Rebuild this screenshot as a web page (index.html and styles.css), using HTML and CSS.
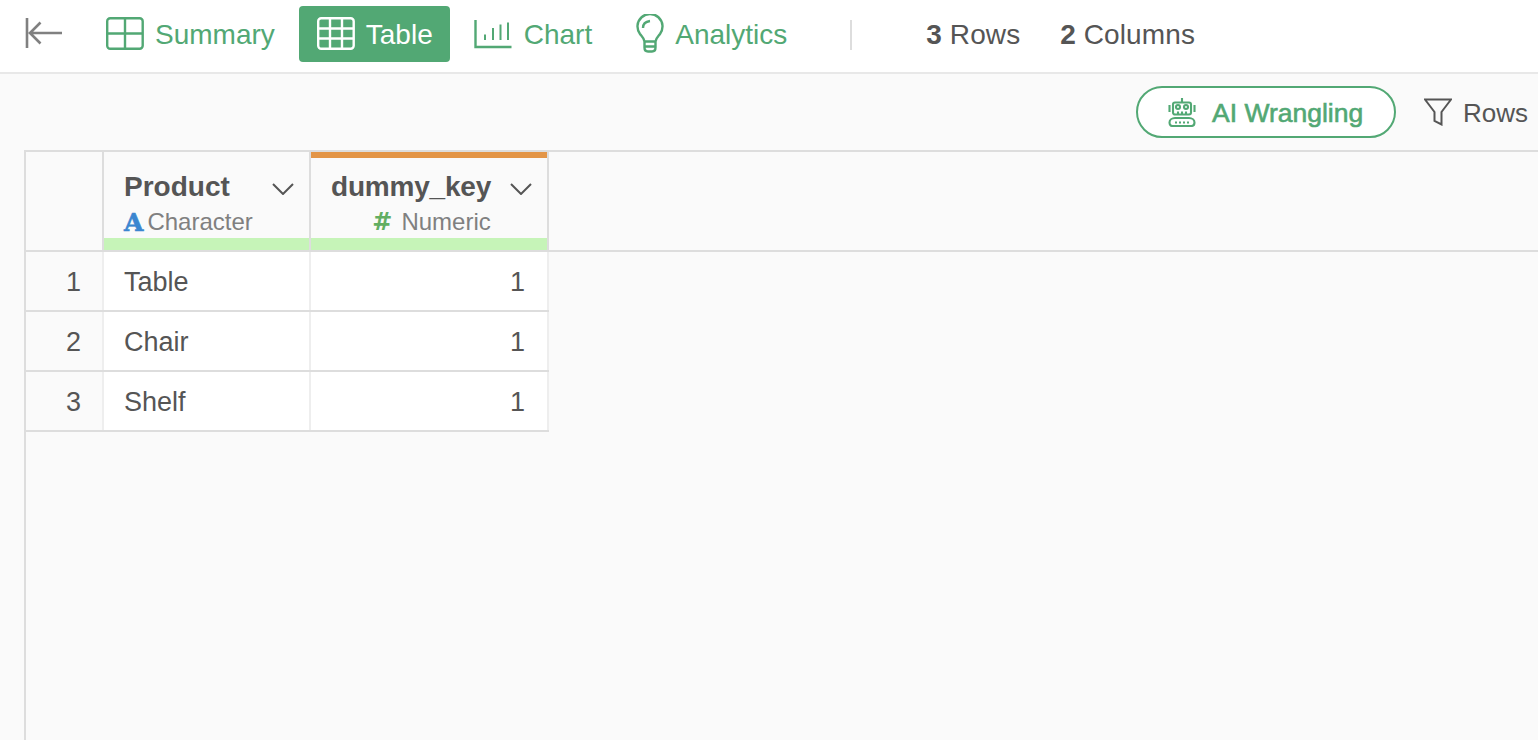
FILE: index.html
```html
<!DOCTYPE html>
<html lang="en">
<head>
<meta charset="utf-8">
<title>Table</title>
<link rel="stylesheet" href="styles.css">
</head>
<body>
<header class="topbar">
  <button class="back" aria-label="Back">
    <svg width="38" height="32" viewBox="0 0 38 32"><path d="M2 1v30M37 16H5M15.500 5.500 5 16 15.500 26.500"/></svg>
  </button>
  <nav class="tabs">
    <a class="tab">
      <svg width="38" height="33" viewBox="0 0 38 33"><rect x="1.200" y="1.200" width="35.500" height="30.500" rx="3"/><path d="M19 1.200v30.500M1.200 16.500h35.500"/></svg>
      <span>Summary</span>
    </a>
    <a class="tab tab-active">
      <svg width="38" height="33" viewBox="0 0 38 33"><rect x="1.200" y="1.200" width="35.500" height="30.500" rx="3"/><path d="M1.200 11.500h35.500M1.200 21.500h35.500M13 1.200v30.500M25 1.200v30.500" /></svg>
      <span>Table</span>
    </a>
    <a class="tab tab-chart">
      <svg width="38" height="30" viewBox="0 0 38 30"><path d="M1.500 1v27h36"/><path class="bars" d="M11 15.500v5.500M19 9v12M26.500 5.500v15.500M34 3.500v17.500"/></svg>
      <span>Chart</span>
    </a>
    <a class="tab tab-bulb">
      <svg width="30" height="40" viewBox="0 0 30 40"><path d="M9.500 27.500C9 24 7 22.500 5 20a12.500 12.500 0 1 1 20 0c-2 2.500-4 4-4.500 7.500zM9.500 27.500h11v6c0 2.500-1.500 4-3.500 4h-4c-2 0-3.500-1.500-3.500-4zM9.500 32.500h11M8 14c0-4 3-6.500 7-7"/></svg>
      <span>Analytics</span>
    </a>
  </nav>
  <div class="divider"></div>
  <div class="stats">
    <span class="stat"><b>3</b> Rows</span>
    <span class="stat"><b>2</b> Columns</span>
  </div>
</header>
<section class="toolbar">
  <button class="ai-btn">
    <svg width="28" height="30" viewBox="0 0 28 30"><path d="M14 1v4M7 5.500h14a2 2 0 0 1 2 2v8a2 2 0 0 1-2 2H7a2 2 0 0 1-2-2v-8a2 2 0 0 1 2-2zM1.500 8v7M26.500 8v7M10 14.500v3M14 14.500v3M18 14.500v3M7 21h14c3 0 5.500 2 5.500 4.500 0 2-1 3.500-3 3.500h-19c-2 0-3-1.500-3-3.500C1.500 23 4 21 7 21z"/><circle cx="10" cy="10" r="2"/><circle cx="18" cy="10" r="2"/><path d="M7 25.500h2M11 25.500h2M15 25.500h2M19 25.500h2"/></svg>
    <span>AI Wrangling</span>
  </button>
  <button class="filter">
    <svg width="28" height="28" viewBox="0 0 28 28"><path d="M1 1.500h26L17.500 14v12.500l-7-3.500v-9z"/></svg>
    <span>Rows</span>
  </button>
</section>
<main class="grid-area">
  <div class="row head-row">
    <div class="corner"></div>
    <div class="col-head">
      <div class="stripe"></div>
      <div class="col-title"><span>Product</span><svg class="chev" width="22" height="12" viewBox="0 0 22 12"><path d="M1 1l10 10L21 1"/></svg></div>
      <div class="col-type"><span class="type-a">A</span><span>Character</span></div>
      <div class="quality"></div>
    </div>
    <div class="col-head">
      <div class="stripe stripe-orange"></div>
      <div class="col-title"><span class="tight">dummy_key</span><svg class="chev" width="22" height="12" viewBox="0 0 22 12"><path d="M1 1l10 10L21 1"/></svg></div>
      <div class="col-type col-type-num"><span class="type-n">#</span><span>Numeric</span></div>
      <div class="quality"></div>
    </div>
  </div>
  <div class="row body-row"><div class="num">1</div><div class="cell">Table</div><div class="cell cell-num">1</div></div>
  <div class="row body-row"><div class="num">2</div><div class="cell">Chair</div><div class="cell cell-num">1</div></div>
  <div class="row body-row"><div class="num">3</div><div class="cell">Shelf</div><div class="cell cell-num">1</div></div>
</main>
</body>
</html>
```
FILE: styles.css
```css
* { box-sizing: border-box; }
html, body { height: 100%; }
body {
  margin: 0;
  background: #fafafa;
  color: #555;
  font-family: "Liberation Sans", Arial, sans-serif;
  display: flex;
  flex-direction: column;
  overflow: hidden;
}
button { font: inherit; border: 0; background: none; padding: 0; color: inherit; }
svg { display: block; fill: none; flex: none; }

.topbar {
  height: 74px;
  flex: none;
  display: flex;
  align-items: center;
  background: #fff;
  border-bottom: 2px solid #e8e8e8;
  padding-bottom: 3px;
}
.back { margin: 0 0 4px 25px; width: 63px; }
.back svg { stroke: #808080; stroke-width: 2.6; }
.tabs { display: flex; gap: 6px; margin-bottom: 2px; }
.tab {
  height: 56px;
  padding: 2px 18px 0;
  display: flex;
  align-items: center;
  gap: 11px;
  font-size: 28px;
  color: #52a874;
  border-radius: 4px;
}
.tab svg { stroke: #52a874; stroke-width: 2.4; margin-bottom: 2px; }
.tab .bars { stroke-width: 2; }
.tab-active { background: #52a874; color: #fff; padding-right: 17px; }
.tab-active svg { stroke: #fff; }
.tab-chart { gap: 12px; }
.tab-bulb { gap: 10px; padding-left: 19px; }
.divider { width: 2px; height: 30px; background: #ddd; margin-left: 45px; }
.stats { display: flex; gap: 40px; margin-left: 74px; font-size: 28px; letter-spacing: 0.1px; }
.stat b { font-weight: 700; }

.toolbar {
  height: 76px;
  flex: none;
  display: flex;
  align-items: center;
  justify-content: flex-end;
  padding-right: 10px;
}
.ai-btn {
  width: 260px;
  height: 52px;
  border: 2px solid #52a874;
  border-radius: 26px;
  background: #fff;
  color: #52a874;
  display: flex;
  align-items: center;
  padding: 2px 0 0 30px;
  gap: 16px;
  font-size: 26.5px;
  -webkit-text-stroke: 0.6px #52a874;
}
.ai-btn svg { stroke: #52a874; stroke-width: 2.1; margin-bottom: 2px; }
.filter {
  margin-left: 28px;
  padding-top: 2px;
  display: flex;
  align-items: center;
  gap: 11px;
  font-size: 26px;
}
.filter svg { stroke: #555; stroke-width: 2; margin-bottom: 2px; }

.grid-area {
  flex: 1;
  margin-left: 24px;
  border-left: 2px solid #ddd;
  border-top: 2px solid #ddd;
}
.row {
  display: grid;
  grid-template-columns: 78px 207px 238px;
}
.head-row { height: 100px; border-bottom: 2px solid #ddd; }
.corner { border-right: 2px solid #ddd; }
.col-head {
  border-right: 2px solid #ddd;
  display: flex;
  flex-direction: column;
}
.stripe { height: 6px; }
.stripe-orange { background: #e39547; }
.col-title {
  margin-top: 12px;
  height: 34px;
  padding: 0 15px 0 20px;
  display: flex;
  align-items: center;
  justify-content: space-between;
  font-size: 28px;
  font-weight: 700;
}
.tight { letter-spacing: -0.2px; }
.chev { stroke: #555; stroke-width: 2; margin-top: 4px; }
.col-type {
  height: 34px;
  padding: 2px 0 0 20px;
  display: flex;
  align-items: center;
  gap: 4px;
  font-size: 24px;
  color: #808080;
}
.col-type-num { justify-content: center; padding-left: 5px; gap: 9px; }
.type-a {
  font-family: "DejaVu Serif", serif;
  font-weight: 700;
  font-size: 25px;
  color: #3b86d0;
  -webkit-text-stroke: 0.6px #3b86d0;
}
.type-n {
  font-family: "DejaVu Sans", sans-serif;
  font-weight: 700;
  font-size: 24px;
  color: #62ae62;
}
.quality { height: 12px; background: #c6f4b8; }

.body-row {
  height: 60px;
  width: 523px;
  border-bottom: 2px solid #ddd;
  font-size: 27px;
  line-height: 56px;
}
.num { padding: 2px 21px 0 0; text-align: right; border-right: 2px solid #eee; }
.cell { background: #fff; padding: 2px 22px 0 20px; border-right: 2px solid #eee; }
.cell-num { text-align: right; }
```
